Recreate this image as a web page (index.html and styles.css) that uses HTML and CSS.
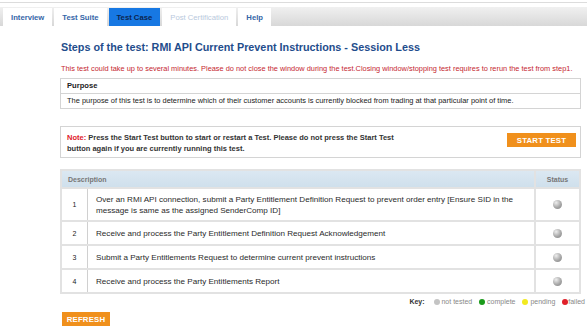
FILE: index.html
```html
<!DOCTYPE html>
<html lang="en">
<head>
    <meta charset="UTF-8">
    <title>Test Case</title>
    <link rel="stylesheet" href="styles.css">
</head>
<body>
    <div class="topline"></div>
    <div class="tabbar">
        <a class="tab">Interview</a>
        <a class="tab">Test Suite</a>
        <a class="tab active">Test Case</a>
        <a class="tab disabled">Post Certification</a>
        <a class="tab">Help</a>
    </div>

    <div class="content">
        <h1>Steps of the test: RMI API Current Prevent Instructions - Session Less</h1>
        <p class="warning">This test could take up to several minutes. Please do not close the window during the test.Closing window/stopping test requires to rerun the test from step1.</p>

        <div class="purpose">
            <div class="purpose-head">Purpose</div>
            <div class="purpose-body">The purpose of this test is to determine which of their customer accounts is currently blocked from trading at that particular point of time.</div>
        </div>

        <div class="note">
            <p><span class="note-label">Note:</span> Press the Start Test button to start or restart a Test. Please do not press the Start Test button again if you are currently running this test.</p>
            <button class="btn start">START TEST</button>
        </div>

        <table class="steps">
            <thead>
                <tr>
                    <th colspan="2" class="desc-head">Description</th>
                    <th class="status-head">Status</th>
                </tr>
            </thead>
            <tbody>
                <tr class="tall">
                    <td class="num">1</td>
                    <td class="desc">Over an RMI API connection, submit a Party Entitlement Definition Request to prevent order entry [Ensure SID in the message is same as the assigned SenderComp ID]</td>
                    <td class="status"><span class="ball"></span></td>
                </tr>
                <tr>
                    <td class="num">2</td>
                    <td class="desc">Receive and process the Party Entitlement Definition Request Acknowledgement</td>
                    <td class="status"><span class="ball"></span></td>
                </tr>
                <tr>
                    <td class="num">3</td>
                    <td class="desc">Submit a Party Entitlements Request to determine current prevent instructions</td>
                    <td class="status"><span class="ball"></span></td>
                </tr>
                <tr>
                    <td class="num">4</td>
                    <td class="desc">Receive and process the Party Entitlements Report</td>
                    <td class="status"><span class="ball"></span></td>
                </tr>
            </tbody>
        </table>

        <div class="key">
            <b>Key:</b>
            <span class="dot grey"></span> not tested
            <span class="dot green"></span> complete
            <span class="dot yellow"></span> pending
            <span class="dot red"></span>failed
        </div>

        <button class="btn refresh">REFRESH</button>
    </div>
</body>
</html>
```

FILE: styles.css
```css
body {
    margin: 0;
    background: #fff;
    font-family: "Liberation Sans", Arial, sans-serif;
    color: #222;
    overflow: hidden;
}

.topline {
    height: 1px;
    margin-top: 2px;
    background: #dcdcdc;
}

.tabbar {
    display: flex;
    gap: 2px;
    margin-top: 4px;
    padding: 1px 3px 0;
    height: 18px;
    background: linear-gradient(#f0f0f0, #d8d8d8);
}

.tab {
    display: flex;
    align-items: center;
    padding: 0 8px;
    background: #fff;
    color: #3566a8;
    font-size: 7.7px;
    font-weight: bold;
}

.tab.active {
    background: #1778e3;
    color: #0b2550;
}

.tab.disabled {
    color: #b9c9dd;
    font-weight: normal;
}

.content {
    width: 521px;
    margin-left: 60px;
}

h1 {
    margin: 15px 0 0 1px;
    font-size: 10.8px;
    color: #1f4d8c;
    line-height: 12px;
}

.warning {
    margin: 11px 0 0 1px;
    font-size: 7.4px;
    color: #c5262f;
    line-height: 9px;
}

.purpose {
    margin-top: 5px;
    border: 1px solid #d4d4d4;
    font-size: 7.45px;
}

.purpose-head {
    padding: 2px 6px;
    height: 10px;
    font-weight: bold;
    font-size: 7.6px;
    border-bottom: 1px solid #d4d4d4;
}

.purpose-body {
    padding: 3px 6px;
    height: 8px;
    line-height: 8px;
}

.note {
    display: flex;
    align-items: flex-start;
    justify-content: space-between;
    margin-top: 17px;
    padding: 5px 4px 3px 6px;
    border: 1px solid #d4d4d4;
}

.note p {
    margin: 0;
    width: 346px;
    font-size: 7.5px;
    font-weight: bold;
    line-height: 11px;
    color: #333;
}

.note-label {
    color: #e0202a;
}

.btn {
    border: 0;
    padding: 0;
    height: 14px;
    background: #f0901c;
    color: #fff;
    font-family: "Liberation Sans", Arial, sans-serif;
    font-weight: bold;
    font-size: 7.8px;
    letter-spacing: 0.2px;
}

.start {
    width: 69px;
    margin-top: 1px;
}

.steps {
    width: 100%;
    margin-top: 11px;
    border-collapse: collapse;
    border: 2px solid #e2e2e2;
    font-size: 8.1px;
}

.steps th {
    height: 16px;
    padding: 0;
    background: linear-gradient(#dbe8f2, #cfe0ec);
    color: #777;
    font-size: 7px;
    text-align: left;
}

.desc-head {
    padding-left: 6px !important;
}

.steps .status-head {
    width: 43px;
    text-align: center;
    border-left: 2px solid #e2e2e2;
}

.steps td {
    height: 22px;
    padding: 0;
    border-top: 2px solid #e2e2e2;
}

.steps tr.tall td {
    height: 31px;
}

.num {
    width: 25px;
    text-align: center;
    border-right: 1px solid #d0d0d0;
    font-size: 7px;
}

.desc {
    padding: 0 6px 0 8px !important;
    line-height: 11px;
    color: #2a2a2a;
}

.status {
    text-align: center;
    border-left: 2px solid #e2e2e2;
}

.ball {
    display: inline-block;
    width: 9px;
    height: 9px;
    border-radius: 50%;
    vertical-align: middle;
    background: radial-gradient(circle at 35% 30%, #eeeeee, #a8a8a8 55%, #7e7e7e);
}

.key {
    margin-top: 4px;
    text-align: right;
    font-size: 7px;
    color: #888;
    line-height: 8px;
    margin-right: -4px;
}

.key b {
    color: #333;
    margin-right: 2px;
}

.dot {
    display: inline-block;
    width: 6px;
    height: 6px;
    border-radius: 50%;
    margin-left: 5px;
    vertical-align: -0.5px;
}

.dot.grey { background: #c4c4c4; }
.dot.green { background: #1a9a1a; }
.dot.yellow { background: #f2ea20; }
.dot.red { background: #e0202a; }

.refresh {
    display: block;
    width: 48px;
    margin: 6px 0 0 2px;
}
```
